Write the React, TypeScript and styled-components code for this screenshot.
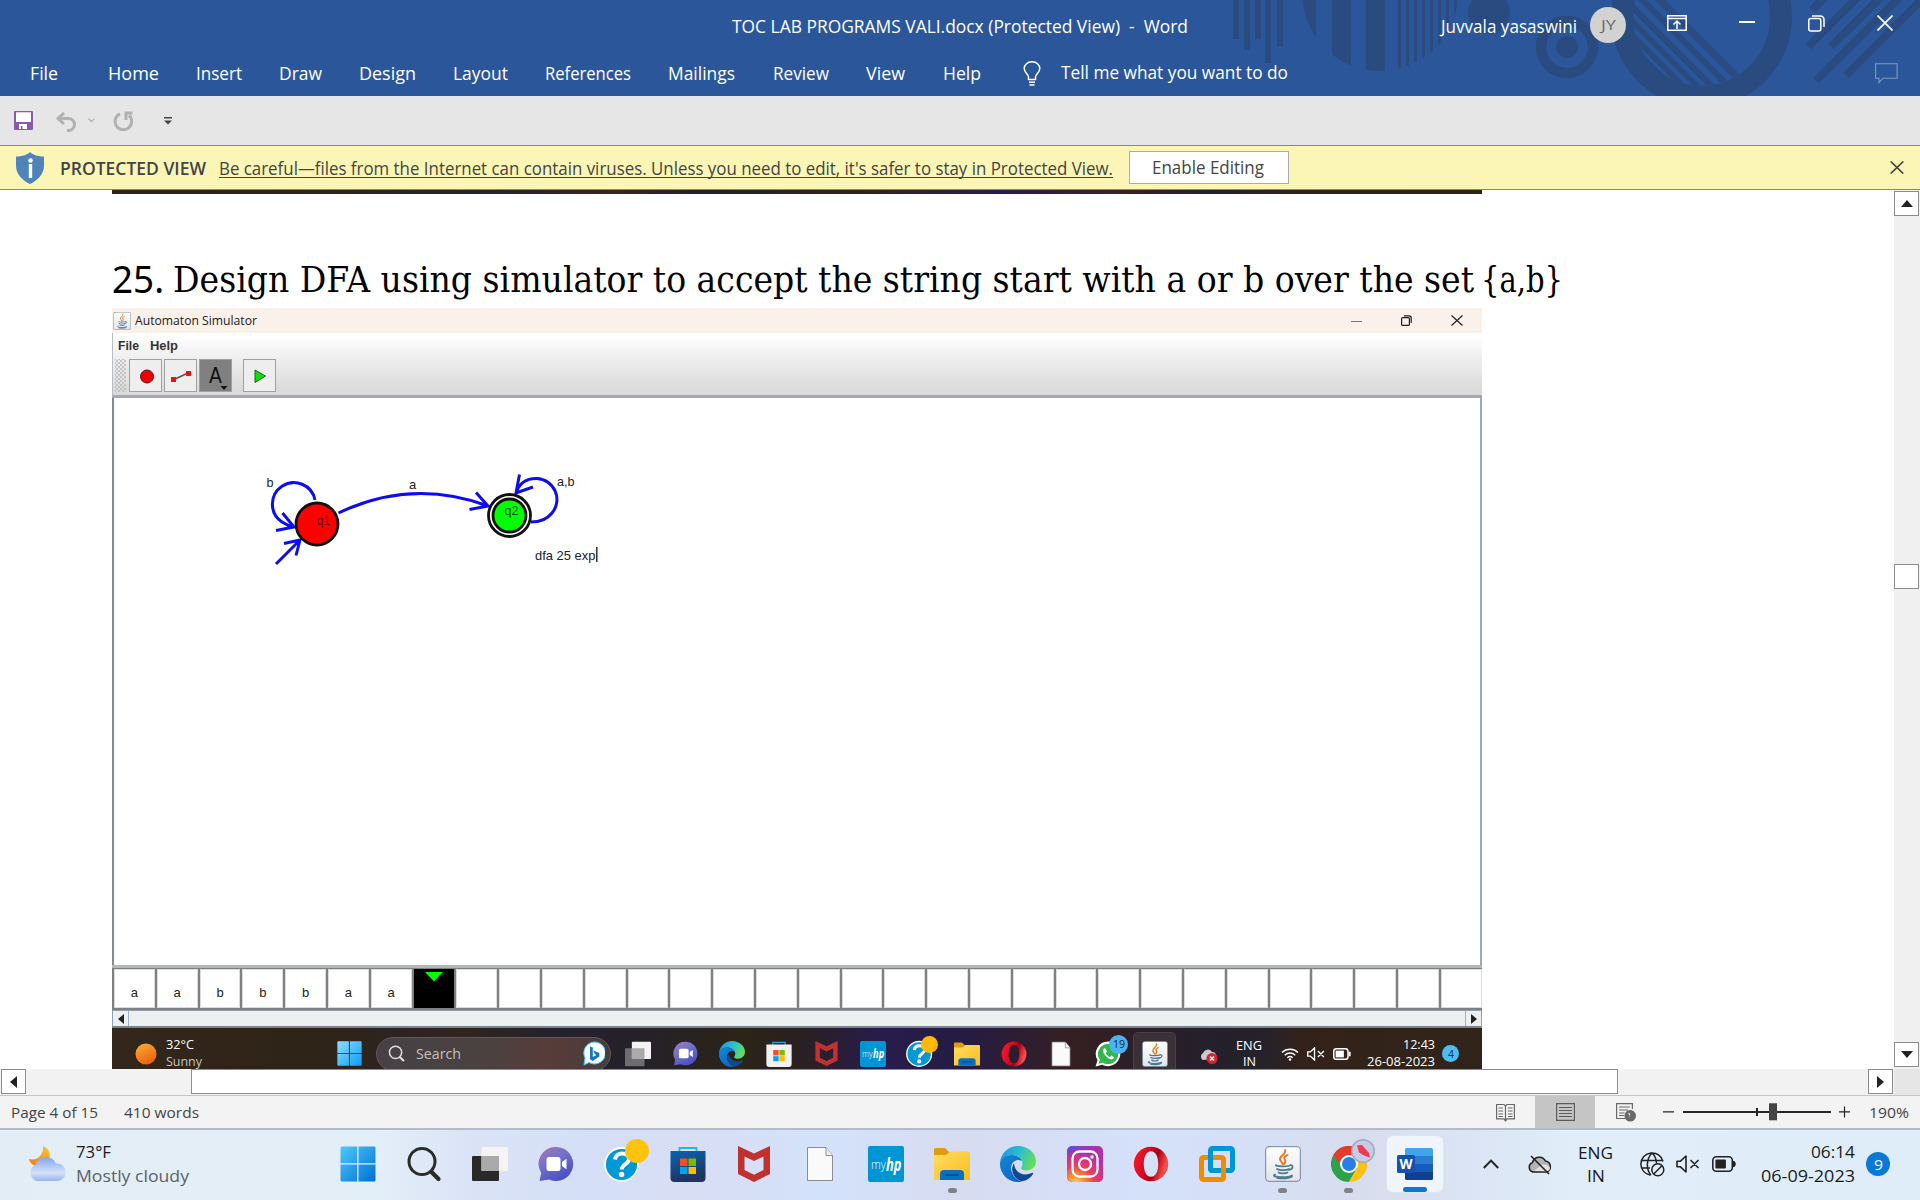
import React, { useLayoutEffect, useRef, useState } from "react";
import styled, { createGlobalStyle } from "styled-components";

const Global = createGlobalStyle`
  * { box-sizing: border-box; }
  body { margin: 0; background: #fff; overflow: hidden; font-family: "Open Sans", "Noto Sans", sans-serif; }
  svg { display: block; flex: none; }
`;

/* ---------- text that keeps a set advance width ---------- */
const LabelBox = styled.div<{ $w: number; $ml: number; $mt: number }>`
  display: flex;
  width: ${(p) => p.$w}px;
  margin-left: ${(p) => p.$ml}px;
  margin-top: ${(p) => p.$mt}px;
  flex: none;
  white-space: pre;
`;
const LabelText = styled.span<{ $size: number; $color: string; $weight: number; $font?: string; $lh: number; $italic?: boolean }>`
  flex: none;
  transform-origin: 0 50%;
  font-size: ${(p) => p.$size}px;
  line-height: ${(p) => p.$lh}px;
  font-weight: ${(p) => p.$weight};
  font-style: ${(p) => (p.$italic ? "italic" : "normal")};
  color: ${(p) => p.$color};
  ${(p) => (p.$font ? `font-family: ${p.$font};` : "")}
`;
type LabelProps = {
  w: number; size: number; children: string; ml?: number; mt?: number;
  color?: string; weight?: number; font?: string; lh?: number; italic?: boolean;
};
function Label({ w, size, children, ml = 0, mt = 0, color = "#fff", weight = 400, font, lh = 22, italic }: LabelProps) {
  const ref = useRef<HTMLSpanElement>(null);
  const [scale, setScale] = useState(1);
  useLayoutEffect(() => {
    const el = ref.current;
    if (el) setScale(w / parseFloat(getComputedStyle(el).width));
  }, [w, children]);
  return (
    <LabelBox $w={w} $ml={ml} $mt={mt}>
      <LabelText ref={ref} $size={size} $color={color} $weight={weight} $font={font} $lh={lh} $italic={italic}
        style={{ transform: `scaleX(${scale})` }}>{children}</LabelText>
    </LabelBox>
  );
}

const arial = '"Liberation Sans", Arial, sans-serif';
const serif = '"DejaVu Serif Condensed", "DejaVu Serif", "Liberation Serif", serif';

/* ---------- page frame ---------- */
const Page = styled.div`
  width: 1920px;
  height: 1200px;
  display: flex;
  flex-direction: column;
  overflow: hidden;
`;
const Slot = styled.div<{ $ml?: number; $mt?: number }>`
  margin-left: ${(p) => p.$ml || 0}px;
  margin-top: ${(p) => p.$mt || 0}px;
  flex: none;
`;

/* ---------- Word header ---------- */
const Header = styled.header`
  position: relative;
  height: 96px;
  flex: none;
  background: #2b579a;
  display: flex;
  flex-direction: column;
`;
const HeaderArt = styled.svg`
  position: absolute;
  right: 0;
  top: 0;
`;
const TitleRow = styled.div`
  position: relative;
  height: 52px;
  display: flex;
  align-items: center;
`;
const TabRow = styled.nav`
  position: relative;
  height: 44px;
  padding-bottom: 1px;
  display: flex;
  align-items: center;
`;
const Avatar = styled.div`
  width: 36px;
  height: 36px;
  margin-left: 13px;
  margin-top: -2px;
  border-radius: 50%;
  background: #d2d2d2;
  display: flex;
  align-items: center;
  justify-content: center;
`;

const Art = () => (
  <HeaderArt width="700" height="96" viewBox="1220 0 700 96" fill="#2a4b80">
    <defs>
      <clipPath id="bigCircle"><circle cx="1380" cy="-7" r="78" /></clipPath>
      <clipPath id="ringHole"><circle cx="1701" cy="17" r="68.500" /></clipPath>
    </defs>
    {[[1233, 39], [1244, 50], [1255, 39], [1265, 63], [1277, 46]].map(([x, h]) => <rect key={x} x={x} width="6" height={h} />)}
    <g clipPath="url(#bigCircle)">
      <rect x="1300" width="16" height="96" /><rect x="1332" width="19" height="96" /><rect x="1366" width="19" height="96" />
      {[1398, 1406, 1414, 1422, 1430, 1438, 1446, 1454].map((x) => <rect key={x} x={x} width="3" height="96" />)}
    </g>
    <circle cx="1489" cy="13" r="21" />
    <circle cx="1567" cy="47" r="26" fill="none" stroke="#2a4b80" strokeWidth="10.500" />
    <circle cx="1567" cy="47" r="11" />
    <circle cx="1701.500" cy="17" r="79.500" fill="none" stroke="#2a4b80" strokeWidth="22" />
    <g clipPath="url(#ringHole)">
      {[[75, 85], [58, 67], [41, 50], [27, 35], [13, 21], [-20, 9]].map(([a, b]) => (
        <path key={a} d={`M${1580 + a} 0H${1580 + b}l100 100h${a - b}z`} />
      ))}
    </g>
    <g stroke="#2a4b80" strokeWidth="8">
      <path d="M1808.500 46.500L1860 -5M1831 46.500L1883 -5M1816 80.500L1902 -5M1846 75.500L1926 -5M1812 10L1827 -5" />
    </g>
  </HeaderArt>
);

const tabs: [string, number, number][] = [
  ["File", 30, 28], ["Home", 108, 51], ["Insert", 196, 46], ["Draw", 279, 43], ["Design", 359, 57],
  ["Layout", 453, 55], ["References", 545, 86], ["Mailings", 668, 67], ["Review", 773, 56], ["View", 866, 39], ["Help", 943, 38],
];

const WordHeader = () => (
  <Header>
    <Art />
    <TitleRow>
      <Label w={456} size={17.3} ml={732} mt={2}>{"TOC LAB PROGRAMS VALI.docx (Protected View)  -  Word"}</Label>
      <Label w={136} size={17.3} ml={253} mt={2}>Juvvala yasaswini</Label>
      <Avatar><Label w={15} size={14} color="#6b6b6b">JY</Label></Avatar>
      <Slot $ml={41} $mt={-6}>
        <svg width="20" height="16" viewBox="0 0 20 16" fill="none" stroke="#fff" strokeWidth="1.500"><path d="M.8.8h18.400v14.400H.8zM.8 3.500h18.400M10 14V6.500M6.500 9.500L10 6l3.500 3.500" /></svg>
      </Slot>
      <Slot $ml={52} $mt={-8}><svg width="16" height="2"><rect width="16" height="2" fill="#fff" /></svg></Slot>
      <Slot $ml={53} $mt={-6}>
        <svg width="17" height="17" viewBox="0 0 17 17" fill="none" stroke="#fff" strokeWidth="1.500"><rect x=".8" y="3.500" width="12" height="12.500" rx="2" /><path d="M4 1h8q4 0 4 4v7" /></svg>
      </Slot>
      <Slot $ml={52} $mt={-6}><svg width="16" height="16" viewBox="0 0 16 16" stroke="#fff" strokeWidth="1.600"><path d="M.5.5l15 15M15.500.5l-15 15" /></svg></Slot>
    </TitleRow>
    <TabRow>
      {tabs.map(([name, x, w], i) => (
        <Label key={name} w={w} size={17.3} ml={i ? x - tabs[i - 1][1] - tabs[i - 1][2] : x}>{name}</Label>
      ))}
      <Slot $ml={42} $mt={0}>
        <svg width="18" height="25" viewBox="0 0 18 25" fill="none" stroke="#fff" strokeWidth="1.500">
          <path d="M5.500 18.500v-2.500C5.500 13 1.200 11.500 1.200 7.500a7.800 6.700 0 0 1 15.600 0c0 4-4.300 5.500-4.300 8.500v2.500zM6 21.200h6M6.500 24h5" />
        </svg>
      </Slot>
      <Label w={227} size={17.3} ml={20} mt={-2}>Tell me what you want to do</Label>
      <Slot $ml={587}>
        <svg width="23" height="21" viewBox="0 0 23 21" fill="none" stroke="#7d99c4" strokeWidth="1.100"><path d="M.6.8h21.500v14.400H8l-4 4.300v-4.300H.6z" /></svg>
      </Slot>
    </TabRow>
  </Header>
);

/* ---------- quick access + protected view ---------- */
const QuickBar = styled.div`
  height: 49px;
  flex: none;
  background: #e6e6e6;
  display: flex;
  align-items: center;
`;
const Notice = styled.div`
  height: 45px;
  flex: none;
  background: #fcf6b6;
  border-top: 1px solid #b88a00;
  border-bottom: 1px solid #b88a00;
  display: flex;
  align-items: center;
`;
const NoticeLink = styled.div`
  margin-left: 13px;
  margin-top: 1px;
  height: 20px;
  border-bottom: 1px solid #444;
`;
const EnableButton = styled.div`
  width: 160px;
  height: 33px;
  margin-left: 16px;
  border: 1px solid #ababab;
  background: #fff;
  display: flex;
  align-items: center;
  padding-left: 22px;
`;

const QuickAccess = () => (
  <QuickBar>
    <Slot $ml={14}>
      <svg width="19" height="19" viewBox="0 0 19 19"><rect width="19" height="19" rx="1" fill="#8c58ad" /><rect x="2" y="1.300" width="15" height="9.700" fill="#fff" /><path d="M5 13h8v5H8.500v-3h-1.500v3H5z" fill="#fff" /></svg>
    </Slot>
    <Slot $ml={22} $mt={2}><svg width="23" height="20" viewBox="0 0 23 20" fill="none" stroke="#b1b1b1" strokeWidth="3"><path d="M9 1L3 6.500 9 12M3 6.500h10.500a6 6 0 0 1 0 12H12" /></svg></Slot>
    <Slot $ml={10}><svg width="7" height="5" viewBox="0 0 7 5" fill="none" stroke="#b1b1b1" strokeWidth="1.300"><path d="M.5.7l3 3 3-3" /></svg></Slot>
    <Slot $ml={18}><svg width="21" height="20" viewBox="0 0 21 20" fill="none" stroke="#b1b1b1" strokeWidth="3"><path d="M7 2.800a8.300 8.300 0 1 0 9 1.500M19.500 2H13v7" /></svg></Slot>
    <Slot $ml={30}><svg width="8" height="8" viewBox="0 0 8 8" fill="#444"><path d="M0 0h8v1.500H0zM0 3.500h8L4 7.500z" /></svg></Slot>
  </QuickBar>
);

const ProtectedView = () => (
  <Notice>
    <Slot $ml={16}>
      <svg width="28" height="32" viewBox="0 0 28 32"><path d="M14 0c2 2.500 8 4.500 14 4.500V14c0 8-7 15-14 18C7 29 0 22 0 14V4.500C6 4.500 12 2.500 14 0z" fill="#4f83ba" /><circle cx="14.500" cy="8.500" r="2.300" fill="#fff" /><rect x="12.800" y="12" width="3.400" height="14" fill="#fff" /></svg>
    </Slot>
    <Label w={146} size={17.3} ml={16} mt={3} color="#444" weight={600}>PROTECTED VIEW</Label>
    <NoticeLink><Label w={894} size={17.3} color="#444">Be careful—files from the Internet can contain viruses. Unless you need to edit, it's safer to stay in Protected View.</Label></NoticeLink>
    <EnableButton><Label w={112} size={17.3} color="#444">Enable Editing</Label></EnableButton>
    <Slot $ml={601} $mt={-1}><svg width="14" height="13" viewBox="0 0 14 13" stroke="#444" strokeWidth="1.700"><path d="M.7.5l12.600 12M13.300.5L.7 12.500" /></svg></Slot>
  </Notice>
);

/* ---------- document ---------- */
const DocRow = styled.div`
  height: 879px;
  flex: none;
  display: flex;
`;
const Doc = styled.main`
  width: 1894px;
  padding-left: 112px;
  background: #fff;
  overflow: hidden;
`;
const PrevStrip = styled.div`
  width: 1370px;
  height: 4px;
  background: linear-gradient(90deg, #2f2318 0, #2b241c 15%, #26222c 28%, #3a2420 37%, #22202a 43%, #302419 55%, #2a1d50 65%, #3a2020 74%, #24202c 80%, #30231a 88%, #2f2318 100%);
`;
const Heading = styled.div`
  height: 114px;
  padding-top: 64px;
  display: flex;
`;
const Sim = styled.section`
  width: 1370px;
  height: 761px;
  display: flex;
  flex-direction: column;
  overflow: hidden;
`;
const SimTitle = styled.div`
  height: 25px;
  flex: none;
  background: #f9f1ea;
  display: flex;
  align-items: center;
`;
const SimTools = styled.div`
  height: 65px;
  flex: none;
  background: linear-gradient(#fff 5%, #f0f0f0 38%, #dadada 92%);
  border-bottom: 3px solid #a3a8ae;
  border-left: 1px solid #b9bec4;
`;
const SimMenu = styled.div`
  display: flex;
  height: 26px;
  padding-left: 4px;
  padding-top: 2px;
`;
const SimButtons = styled.div`
  display: flex;
  height: 33px;
`;
const Grip = styled.div`
  width: 11px;
  height: 33px;
  margin: 0 4px 0 2px;
  background-image: radial-gradient(#c4c4c4 0.8px, transparent 1px), radial-gradient(#c4c4c4 0.8px, transparent 1px);
  background-size: 4px 4px;
  background-position: 0 0, 2px 2px;
`;
const ToolButton = styled.div<{ $on?: boolean; $ml?: number }>`
  width: 33px;
  height: 33px;
  margin-left: ${(p) => p.$ml ?? 1}px;
  border: 1px solid #a0a0a0;
  background: ${(p) => (p.$on ? "#808080" : "#eee")};
  display: flex;
  align-items: center;
  justify-content: center;
`;
const CanvasArea = styled.div`
  height: 567px;
  flex: none;
  background: #fff;
  border-left: 2px solid #7f8b96;
  border-right: 2px solid #9fa8b0;
`;
const Tape = styled.div`
  height: 45px;
  flex: none;
  border-top: 3px solid #b0b8ba;
  background: #808080;
  padding: 1px 0 2px 2px;
  display: flex;
`;
const Cell = styled.div<{ $head?: boolean }>`
  width: 40.8px;
  margin-right: 2px;
  flex: none;
  background: ${(p) => (p.$head ? "#000" : "#fff")};
  box-shadow: inset 0 0 0 1px ${(p) => (p.$head ? "#000" : "#dcdcdc")};
  display: flex;
  justify-content: center;
  align-items: ${(p) => (p.$head ? "flex-start" : "center")};
  padding-top: ${(p) => (p.$head ? 3 : 7)}px;
  font: 13px ${arial};
  color: #222;
`;
const SimScroll = styled.div`
  height: 18px;
  flex: none;
  background: #eeeff0;
  border: 1px solid #8fa0b0;
  border-bottom: 2px solid #77828f;
  display: flex;
  justify-content: space-between;
`;
const SimArrow = styled.div<{ $right?: boolean }>`
  width: 16px;
  display: flex;
  align-items: center;
  justify-content: center;
  border-${(p) => (p.$right ? "left" : "right")}: 1px solid #9fb0c4;
`;
const DarkBar = styled.div`
  position: relative;
  height: 41px;
  flex: none;
  overflow: hidden;
  background: linear-gradient(90deg, #33261a 0, #2f2418 14%, #2d2423 22%, #30251f 26%, #24222b 32%, #24212a 38%, #2c2418 46%, #2a2020 50%, #281c4c 56%, #251c44 62%, #351f22 70%, #2c1f28 75%, #24202c 80%, #26222b 84%, #33221a 87%, #30251a 100%);
`;
const DarkRow = styled.div`
  display: flex;
  height: 51px;
  align-items: center;
`;
const SearchPill = styled.div`
  width: 235px;
  height: 34px;
  margin-left: 14px;
  border-radius: 17px;
  border: 1px solid #625855;
  background: linear-gradient(90deg, #474146, #4a4140 45%, #573c38 75%, #463c40);
  display: flex;
  align-items: center;
  padding-left: 11px;
`;
const ActiveDark = styled.div`
  width: 43px;
  height: 43px;
  margin-left: 12px;
  border-radius: 5px;
  background: #3a3038;
  border: 1px solid #4a4048;
  display: flex;
  align-items: center;
  justify-content: center;
`;
const Stack = styled.div<{ $ml?: number; $end?: boolean; $center?: boolean; $mt?: number }>`
  display: flex;
  flex-direction: column;
  flex: none;
  margin-left: ${(p) => p.$ml || 0}px;
  margin-top: ${(p) => p.$mt || 0}px;
  align-items: ${(p) => (p.$end ? "flex-end" : p.$center ? "center" : "flex-start")};
`;
const IconWrap = styled.div<{ $ml?: number }>`
  position: relative;
  flex: none;
  margin-left: ${(p) => p.$ml || 0}px;
`;
const Badge = styled.div<{ $size: number; $x: number; $y: number; $bg: string }>`
  position: absolute;
  left: ${(p) => p.$x}px;
  top: ${(p) => p.$y}px;
  width: ${(p) => p.$size}px;
  height: ${(p) => p.$size}px;
  border-radius: 50%;
  background: ${(p) => p.$bg};
  display: flex;
  align-items: center;
  justify-content: center;
`;
const CountDot = styled.div<{ $size: number; $ml: number; $bg: string; $mt?: number }>`
  width: ${(p) => p.$size}px;
  height: ${(p) => p.$size}px;
  margin-left: ${(p) => p.$ml}px;
  margin-top: ${(p) => p.$mt || 0}px;
  flex: none;
  border-radius: 50%;
  background: ${(p) => p.$bg};
  display: flex;
  align-items: center;
  justify-content: center;
`;

/* ---------- app icons, all on a 36 unit grid ---------- */
type S = { s?: number };
const Windows = ({ s = 36 }: S) => (
  <svg width={s} height={s} viewBox="0 0 36 36">
    <defs><linearGradient id={`win${s}`} x1="0" y1="0" x2="1" y2="1"><stop offset="0" stopColor={s < 30 ? "#8adfff" : "#4cc8fb"} /><stop offset="1" stopColor={s < 30 ? "#0c9cf5" : "#0170d2"} /></linearGradient></defs>
    <path fill={`url(#win${s})`} d="M1.500.5H17.200V17.200H.5V1.500zM18.500.5H34.500l1 1V17.200H18.500zM.5 18.500H17.200V35.500H1.500l-1-1zM18.500 18.500H35.500v16l-1 1H18.500z" />
  </svg>
);
const SearchIcon = ({ s = 36, c = "#2b2b2b", w = 3 }: S & { c?: string; w?: number }) => (
  <svg width={s} height={s} viewBox="0 0 36 36" fill="none" stroke={c} strokeLinecap="round"><circle cx="16" cy="15.500" r="13" strokeWidth={w} /><path d="M25.500 26l7 7" strokeWidth={w + 1.2} /></svg>
);
const TaskView = ({ s = 36 }: S) => (
  <svg width={s} height={s} viewBox="0 0 36 36"><rect x="0" y="10" width="27" height="25" rx="1" fill={s < 30 ? "#6e6c6e" : "#292929"} /><rect x="9.500" y="1" width="26.500" height="24" rx="1" fill="#f4f4f4" /><rect x="9.500" y="10" width="17.500" height="15" fill="#aaa" /></svg>
);
const Chat = ({ s = 36 }: S) => (
  <svg width={s} height={s} viewBox="0 0 36 36">
    <defs><linearGradient id={`chat${s}`} x1="0" y1="0" x2=".6" y2="1"><stop offset="0" stopColor="#a57bb0" /><stop offset=".45" stopColor="#7572c8" /><stop offset="1" stopColor="#4b50c4" /></linearGradient></defs>
    <path fill={`url(#chat${s})`} d="M18 1a17 17 0 1 1-7 32.400L1.500 35l1.700-8A17 17 0 0 1 18 1z" /><rect x="8.500" y="11" width="14" height="14" rx="2.500" fill="#fff" /><path d="M24 16l4.500-3.200v10.400L24 20z" fill="#fff" />
  </svg>
);
const HelpIcon = ({ s = 36 }: S) => (
  <svg width={s} height={s} viewBox="0 0 36 36"><circle cx="17.500" cy="18.500" r="16.500" fill="#0098d6" stroke="#fff" strokeWidth="1.800" /><path d="M11 13.500c.5-4 3.500-6 7-6 4 0 7 2.300 7 5.500 0 5-7 5-7.300 10.500" fill="none" stroke="#fff" strokeWidth="4" /><circle cx="17.600" cy="28.500" r="2.700" fill="#fff" /></svg>
);
const Store = ({ s = 36 }: S) => (
  <svg width={s} height={s} viewBox="0 0 36 36">
    <defs><linearGradient id="store" x1="0" y1="0" x2=".3" y2="1"><stop offset="0" stopColor="#0b63b4" /><stop offset="1" stopColor="#20335c" /></linearGradient></defs>
    <path d="M9.500 7V2h17v5" fill="none" stroke={s < 30 ? "#2aa0d8" : "#25b4f2"} strokeWidth="1.800" /><path d="M.5 5h35v27a4 4 0 0 1-4 4h-27a4 4 0 0 1-4-4z" fill={s < 30 ? "#f3f2f2" : "url(#store)"} />
    <path d="M10 12.500h7.500V20H10z" fill="#f25022" /><path d="M18.500 12.500H26V20h-7.500z" fill="#7fba00" /><path d="M10 21h7.500v7H10z" fill="#00a4ef" /><path d="M18.500 21H26v7h-7.500z" fill="#ffb900" />
  </svg>
);
const McAfee = ({ s = 36 }: S) => (
  <svg width={s} height={s} viewBox="0 0 36 36"><path d="M2 0l16 7.500L34 0v28l-16 8-16-8zM8.500 10.500V24l9.500 4.800 9.500-4.800V10.500L18 15z" fill="#c1312f" fillRule="evenodd" /></svg>
);
const FileIcon = ({ s = 36 }: S) => (
  <svg width={s} height={s} viewBox="0 0 36 36" fill="#fafafa" stroke="#8c8c8c"><path d="M5.500 1.500H24l6.500 8v25h-25z" /><path d="M24 1.500v8h6.500" fill="#eee" /></svg>
);
const HpTile = styled.div<{ $s: number }>`
  width: ${(p) => p.$s}px;
  height: ${(p) => p.$s}px;
  flex: none;
  border-radius: 2px;
  background: #0096d6;
  display: flex;
  align-items: center;
  justify-content: center;
`;
const MyHp = ({ s = 36 }: S) => (
  <HpTile $s={s}><Label w={s * 0.41} size={s * 0.36} lh={s * 0.5} weight={300}>my</Label><Label w={s * 0.43} size={s * 0.49} lh={s * 0.5} weight={700} italic>hp</Label></HpTile>
);
const Folder = ({ s = 36 }: S) => (
  <svg width={s} height={s} viewBox="0 0 36 36">
    <defs><linearGradient id="fold" x1="0" y1="0" x2="1" y2="1"><stop offset="0" stopColor="#ffdc62" /><stop offset="1" stopColor="#f8bf1e" /></linearGradient></defs>
    <path d="M0 3.500Q0 2 1.500 2H11l4 4H20v6H0z" fill="#dd9d0c" /><path d="M0 9h12l4-3.500h18.500Q36 5.500 36 7v27H0z" fill="url(#fold)" /><path d="M6 34v-6q0-4 4-4h16q4 0 4 4v6z" fill="#0b6ec5" /><rect x="11" y="28.200" width="14" height="1.600" rx=".8" fill="#0a4a86" />
  </svg>
);
const Edge = ({ s = 36 }: S) => (
  <svg width={s} height={s} viewBox="0 0 36 36">
    <defs>
      <linearGradient id={`ed1${s}`} x1="0" y1=".3" x2="1" y2=".6"><stop offset="0" stopColor="#1f97dc" /><stop offset=".5" stopColor="#2cc0cf" /><stop offset="1" stopColor="#6ae04d" /></linearGradient>
      <linearGradient id={`ed2${s}`} x1="0" y1="0" x2=".6" y2="1"><stop offset="0" stopColor="#1486d8" /><stop offset="1" stopColor="#0c68c4" /></linearGradient>
    </defs>
    <path d="M0 16.500C1 7 8.500 0 18 0c10 0 18 7 18 15 0 6-4.500 9.500-9.500 9.500-3.500 0-5.500-1.300-5.500-2.500 0-.8 1.500-1.800 1.500-4.300C22.500 12.500 17 9 11 9 6 9 2 12 0 16.500z" fill={`url(#ed1${s})`} />
    <path d="M0 17C1 12 5.500 9 11 9c5.500 0 9.500 2.500 11 6-6-3.500-12.500 2-10.500 10 1.300 5.500 6 10 10.500 10.400-1.300.4-2.500.6-4 .6C8 36 0 28 0 18z" fill={`url(#ed2${s})`} />
    <path d="M14 17.500c-5 7 1 17 8.500 17.800 5-1 8.500-4 10.500-7.300.5-1-.3-1.500-1.200-1-8 3.800-16.800 0-17.800-9.500z" fill="#114a94" />
  </svg>
);
const Insta = () => (
  <svg width="36" height="36" viewBox="0 0 36 36">
    <defs>
      <linearGradient id="ig1" x1="0" y1="0" x2="1" y2="0"><stop offset="0" stopColor="#5b51d8" /><stop offset=".6" stopColor="#a033b5" /><stop offset="1" stopColor="#b92fa6" /></linearGradient>
      <radialGradient id="ig2" cx=".25" cy="1.05" r="1"><stop offset="0" stopColor="#ffd45c" /><stop offset=".25" stopColor="#fa8d34" /><stop offset=".5" stopColor="#ee3d5c" /><stop offset=".8" stopColor="#cf2f92" stopOpacity=".9" /><stop offset="1" stopColor="#8134c0" stopOpacity="0" /></radialGradient>
    </defs>
    <rect width="36" height="36" rx="5" fill="url(#ig1)" /><rect width="36" height="36" rx="5" fill="url(#ig2)" />
    <g fill="none" stroke="#fff" strokeWidth="2.300"><rect x="5.500" y="5.500" width="25" height="25" rx="7" /><circle cx="18" cy="18" r="6" /></g><circle cx="25" cy="11" r="1.700" fill="#fff" />
  </svg>
);
const Opera = ({ s = 36 }: S) => (
  <svg width={s} height={s} viewBox="0 0 36 36">
    <defs><linearGradient id={`op${s}`} x1="0" y1="0" x2="1" y2=".3"><stop offset="0" stopColor="#ff1b2d" /><stop offset=".5" stopColor="#d10a20" /><stop offset=".7" stopColor="#a70014" /><stop offset="1" stopColor="#ff4b4b" /></linearGradient></defs>
    <path d="M18 .8a17.200 17.200 0 1 1 0 34.400 17.200 17.200 0 0 1 0-34.400zm0 4.400c-4.500 0-7.200 5-7.200 12.800S13.500 30.800 18 30.800 25.200 25.800 25.200 18 22.500 5.200 18 5.200z" fill={`url(#op${s})`} fillRule="evenodd" />
  </svg>
);
const Vmware = () => (
  <svg width="36" height="36" viewBox="0 0 36 36" fill="none" strokeWidth="5"><rect x="11.500" y="2.500" width="22" height="22" rx="2" stroke="#0095d3" /><rect x="2.500" y="11.500" width="22" height="22" rx="2" stroke="#f38b00" /><path d="M11.500 9v13.500q0 2 2 2H20" stroke="#0095d3" /></svg>
);
const Java = ({ s = 36 }: S) => (
  <svg width={s} height={s} viewBox="0 0 36 36" fill="none" strokeLinecap="round">
    <defs><linearGradient id={`jv${s}`} x1="0" y1="0" x2="0" y2="1"><stop offset="0" stopColor="#fff" /><stop offset="1" stopColor="#e2e5e8" /></linearGradient></defs>
    <rect x=".7" y=".7" width="34.600" height="34.600" rx="3" fill={`url(#jv${s})`} stroke="#6f8799" />
    <path d="M20 4c2 4-6 6-5 9.500.5 2 2 2.500 2.500 4.500M22.500 9c-3 1.500-4 3-2.500 5 .8 1.200.5 2.500-1 4" stroke="#ea7620" strokeWidth="1.900" />
    <path d="M11 19c-2 1.500 13 2 14.500 0M12 23c2 1.500 9.500 1.500 12 0M13.500 26.500c2 1.200 6.500 1.200 9 0M24.500 19.500c4.500-1.500 4 3.500-.5 4.500M10 28.500c-6 2.500 12 4 17 1M12 32c6 1 13 .5 15-1.500" stroke="#4d7896" strokeWidth="1.700" />
  </svg>
);
const Chrome = () => (
  <svg width="36" height="36" viewBox="0 0 36 36">
    <path d="M18 18L2.400 9A18 18 0 0 1 33.600 9z" fill="#e33b2e" /><path d="M2.400 9A18 18 0 0 0 18 36l7.800-13.500L18 18z" fill="#2da14c" /><path d="M33.600 9A18 18 0 0 1 18 36l7.800-13.500A9 9 0 0 0 18 9z" fill="#fdc113" />
    <path d="M2.400 9l7.800 13.500L18 18V9z" fill="#2da14c" /><path d="M2.400 9A18 18 0 0 1 33.600 9H18a9 9 0 0 0-8.500 6.500L8 17z" fill="#e33b2e" /><circle cx="18" cy="18" r="9" fill="#fff" /><circle cx="18" cy="18" r="7" fill="#2a7de9" />
  </svg>
);
const WhatsApp = ({ s = 36 }: S) => (
  <svg width={s} height={s} viewBox="0 0 36 36"><path d="M18 .8a17 17 0 1 1-8 32L.8 35.200 3.500 26.500A17 17 0 0 1 18 .8z" fill="#fff" /><path d="M18 4a14 14 0 1 1-7.200 26L5 31.500l1.700-5.500A14 14 0 0 1 18 4z" fill="#2fb84c" /><path d="M12.500 10.500c-3 3 0 8 3 11s8 5.500 10.500 2.500c1-1.500 0-2-3.500-4l-2 2c-2-.5-5-3.500-5.500-5.500l1.500-2c-1.500-4-2.500-5.500-4-4z" fill="#fff" /></svg>
);
const WordIcon = () => (
  <svg width="36" height="34" viewBox="0 0 36 34">
    <path d="M8 2.500Q8 1 9.500 1h25Q36 1 36 2.500V9H8z" fill="#41a5ee" /><path d="M8 9h28v8H8z" fill="#2b7cd3" /><path d="M8 17h28v8H8z" fill="#185abd" /><path d="M8 25h28v6.500q0 1.500-1.500 1.500h-25Q8 33 8 31.500z" fill="#103f91" />
    <rect x="0" y="8" width="18" height="18" rx="1.500" fill="#1650b0" /><text x="9" y="22" fontFamily="Open Sans" fontWeight="700" fontSize="13.500" fill="#fff" textAnchor="middle">W</text>
  </svg>
);
const Bing = () => (
  <svg width="23" height="25" viewBox="0 0 23 25"><path d="M12 1a11 11 0 1 1-5 20.500L2 24l1-7A11 11 0 0 1 12 1z" fill="#f5fbff" stroke="#48c7ea" strokeWidth="1" /><path d="M8 5.500l2.800 1v9.500l3.500-2-1.500-1-1.500-3.500 6 2.500v3.500l-6.500 4.500-2.800-1.800z" fill="#1b73c9" /></svg>
);
const Speaker = ({ c }: { c: string }) => (
  <svg width="24" height="18" viewBox="0 0 24 18" fill="none" stroke={c} strokeWidth="1.600" strokeLinejoin="round"><path d="M1 6.200h3.500L10 1v16l-5.500-5.200H1zM14.500 5l8 8M22.500 5l-8 8" /></svg>
);
const Battery = ({ c, on = 11 }: { c: string; on?: number }) => (
  <svg width="24" height="16" viewBox="0 0 24 16"><rect x=".8" y=".8" width="19.500" height="14.400" rx="3.500" fill="none" stroke={c} strokeWidth="1.600" /><rect x="3.400" y="3.400" width={on} height="9.200" rx="1" fill={c} /><path d="M21 5h1.200q1.600 1 1.600 3t-1.600 3H21z" fill={c} /></svg>
);

/* ---------- automaton window ---------- */
const Diagram = () => (
  <svg width="1366" height="567" viewBox="114 398 1366 567" fontFamily="Liberation Sans" fontSize="13" fill="#222">
    <g fill="none" stroke="#0d0dee" strokeWidth="3">
      <path d="M315 500A21.500 21.500 0 1 0 282 522Q288 526 294 527M282.500 513L294 527 276 530.500" />
      <path d="M276 564L300 540M284 543.500L300 540 296 555.500" />
      <path d="M338.500 513Q412 478 488 506M476 492.500L488 506 469.500 509.500" />
      <path d="M531 522Q545 522 552 513A21 21 0 0 0 537 478.500Q521 478 516 493M519.500 474.500L516 493 533 487" />
    </g>
    <circle cx="317" cy="524" r="21" fill="#f00" stroke="#111" strokeWidth="2.800" />
    <circle cx="509.500" cy="515.500" r="21" fill="#fff" stroke="#111" strokeWidth="2.800" />
    <circle cx="509.500" cy="515.500" r="16.500" fill="#0f0" stroke="#111" strokeWidth="2.800" />
    <text x="266.500" y="487" textLength="7" lengthAdjust="spacingAndGlyphs">b</text>
    <text x="409" y="488.500">a</text>
    <text x="557" y="486" textLength="17.500" lengthAdjust="spacingAndGlyphs">a,b</text>
    <text x="317" y="525" fill="#600" textLength="13" lengthAdjust="spacingAndGlyphs">q1</text>
    <text x="504.500" y="515" fill="#053" textLength="14" lengthAdjust="spacingAndGlyphs">q2</text>
    <text x="535" y="560.300" textLength="60.500" lengthAdjust="spacingAndGlyphs">dfa 25 exp</text>
    <path d="M596.800 547v15" stroke="#111" strokeWidth="1.300" />
  </svg>
);

const tape = ["a", "a", "b", "b", "b", "a", "a"];

const Simulator = () => (
  <Sim>
    <SimTitle>
      <Slot $ml={1}><Java s={18} /></Slot>
      <Label w={122} size={12.3} ml={4} color="#222">Automaton Simulator</Label>
      <Slot $ml={1094}><svg width="11" height="2"><rect width="11" height="1" y="1" fill="#777" /></svg></Slot>
      <Slot $ml={39}><svg width="11" height="11" viewBox="0 0 11 11" fill="none" stroke="#222" strokeWidth="1.200"><rect x=".6" y="2.600" width="7.800" height="7.800" rx="1" /><path d="M3 .8h5Q10.200.8 10.200 3v5" /></svg></Slot>
      <Slot $ml={39}><svg width="12" height="11" viewBox="0 0 12 11" stroke="#222" strokeWidth="1.200"><path d="M.5.5l11 10M11.500.5L.5 10.500" /></svg></Slot>
    </SimTitle>
    <SimTools>
      <SimMenu>
        <Label w={21} size={13} ml={1} weight={700} color="#333" font={arial} lh={21}>File</Label>
        <Label w={28} size={13} ml={11} weight={700} color="#333" font={arial} lh={21}>Help</Label>
      </SimMenu>
      <SimButtons>
        <Grip />
        <ToolButton $ml={-1}><svg width="16" height="16"><circle cx="9" cy="8.500" r="6.500" fill="#f00000" stroke="#5c1010" /></svg></ToolButton>
        <ToolButton $ml={2}><svg width="22" height="14" viewBox="0 0 22 14"><path d="M3 11L18 4" stroke="#555" strokeWidth="1.500" /><rect x="1" y="8" width="5" height="5" fill="#f01010" /><rect x="16" y="2" width="5" height="5" fill="#f01010" /></svg></ToolButton>
        <ToolButton $on $ml={2}>
          <svg width="31" height="31" viewBox="0 0 31 31"><path d="M20.500 26h7l-3.500 4z" fill="#111" /><text x="15.500" y="22.500" fontFamily="DejaVu Sans Condensed, DejaVu Sans" fontSize="21" textAnchor="middle" fill="#111">A</text></svg>
        </ToolButton>
        <ToolButton $ml={11}><svg width="14" height="16"><path d="M2 2l10.500 6L2 14.500z" fill="#0be00b" stroke="#235c23" /></svg></ToolButton>
      </SimButtons>
    </SimTools>
    <CanvasArea><Diagram /></CanvasArea>
    <Tape>
      {Array.from({ length: 32 }, (_, i) => (
        <Cell key={i} $head={i === 7}>{i === 7 ? <svg width="18" height="10"><path d="M0 0h18L9 9.500z" fill="#0f0" /></svg> : tape[i]}</Cell>
      ))}
    </Tape>
    <SimScroll>
      <SimArrow><svg width="6" height="10"><path d="M6 0v10L0 5z" fill="#222" /></svg></SimArrow>
      <SimArrow $right><svg width="6" height="10"><path d="M0 0v10l6-5z" fill="#222" /></svg></SimArrow>
    </SimScroll>
    <DarkBar>
      <DarkRow>
        <Slot $ml={23}><svg width="22" height="22"><defs><linearGradient id="sun" x1="0" y1="0" x2=".5" y2="1"><stop offset="0" stopColor="#fbb234" /><stop offset="1" stopColor="#ee6210" /></linearGradient></defs><circle cx="11" cy="11" r="10.500" fill="url(#sun)" /></svg></Slot>
        <Stack $ml={9} $mt={-1}>
          <Label w={28} size={12} lh={17}>32°C</Label>
          <Label w={36} size={12} lh={17} color="#c8c4c0">Sunny</Label>
        </Stack>
        <Slot $ml={135}><Windows s={25} /></Slot>
        <SearchPill>
          <SearchIcon s={17} c="#e0dcdc" w={3.2} />
          <Label w={45} size={14} ml={11} color="#c5c0c0">Search</Label>
          <Slot $ml={121}><Bing /></Slot>
        </SearchPill>
        <IconWrap $ml={14}><TaskView s={26} /></IconWrap>
        <IconWrap $ml={22}><Chat s={25} /></IconWrap>
        <IconWrap $ml={21}><Edge s={26} /></IconWrap>
        <IconWrap $ml={21}><Store s={26} /></IconWrap>
        <IconWrap $ml={22}><McAfee s={25} /></IconWrap>
        <IconWrap $ml={21}><MyHp s={26} /></IconWrap>
        <IconWrap $ml={20}><HelpIcon s={27} /><Badge $size={17} $x={15} $y={-4} $bg="#ffb90a" /></IconWrap>
        <IconWrap $ml={21}><Folder s={26} /></IconWrap>
        <IconWrap $ml={21}><Opera s={26} /></IconWrap>
        <IconWrap $ml={21}><FileIcon s={26} /></IconWrap>
        <IconWrap $ml={21}><WhatsApp s={26} /><Badge $size={19} $x={14} $y={-6} $bg="#4cb4ec"><Label w={12} size={11.5} color="#102a3c" lh={18}>19</Label></Badge></IconWrap>
        <ActiveDark><Java s={26} /></ActiveDark>
        <Slot $ml={23} $mt={4}><svg width="19" height="16" viewBox="0 0 19 16"><path d="M4 12a4 4 0 0 1 0-7 5 5 0 0 1 9-1 4 4 0 0 1 3 7z" fill="#c9c9cc" /><circle cx="13" cy="10.500" r="5.500" fill="#d8232f" /><path d="M11 8.500l4 4M15 8.500l-4 4" stroke="#fff" strokeWidth="1.500" /></svg></Slot>
        <Stack $ml={18} $center $mt={1}>
          <Label w={26} size={12.5} lh={16.5}>ENG</Label>
          <Label w={13} size={12.5} lh={16.5}>IN</Label>
        </Stack>
        <Slot $ml={19}><svg width="18" height="14" viewBox="0 0 18 14" fill="none" stroke="#fff" strokeWidth="1.400"><path d="M1 5.500a11.500 11.500 0 0 1 16 0M3.700 8.200a7.500 7.500 0 0 1 10.600 0M6.300 10.800a4 4 0 0 1 5.400 0" /><circle cx="9" cy="12.500" r="1.300" fill="#fff" stroke="none" /></svg></Slot>
        <Slot $ml={8}><svg width="18" height="14" viewBox="0 0 24 18" fill="none" stroke="#fff" strokeWidth="1.800"><path d="M1 6.200h3.500L10 1v16l-5.500-5.200H1zM14.500 5l8 8M22.500 5l-8 8" /></svg></Slot>
        <Slot $ml={8}><svg width="18" height="12" viewBox="0 0 24 16"><rect x="1" y="1" width="19" height="14" rx="3.500" fill="none" stroke="#fff" strokeWidth="2" /><rect x="3.500" y="3.500" width="11" height="9" fill="#fff" /><path d="M21 5h2.500v6H21z" fill="#fff" /></svg></Slot>
        <Stack $ml={16} $end $mt={-1}>
          <Label w={32} size={12} lh={17}>12:43</Label>
          <Label w={68} size={12} lh={17}>26-08-2023</Label>
        </Stack>
        <CountDot $size={17} $ml={7} $bg="#4cbcf5"><Label w={6} size={11} color="#10344c" lh={17}>4</Label></CountDot>
      </DarkRow>
    </DarkBar>
  </Sim>
);

/* ---------- scrollbars & status ---------- */
const VScroll = styled.div`
  width: 26px;
  flex: none;
  background: #f0f0f0;
  display: flex;
  flex-direction: column;
  padding-top: 1px;
`;
const ScrollBox = styled.div<{ $w?: number; $h?: number; $mt?: number; $ml?: number }>`
  width: ${(p) => p.$w ?? 25}px;
  height: ${(p) => p.$h ?? 25}px;
  margin-top: ${(p) => p.$mt || 0}px;
  margin-left: ${(p) => p.$ml || 0}px;
  flex: none;
  border: 1px solid #8c8c8c;
  background: #fff;
  display: flex;
  align-items: center;
  justify-content: center;
`;
const HScroll = styled.div`
  height: 26px;
  flex: none;
  background: #f2f2f2;
  display: flex;
`;
const Corner = styled.div`
  width: 26px;
  height: 26px;
  margin-left: 1px;
  background: #e6e6e6;
`;
const Status = styled.footer`
  height: 35px;
  flex: none;
  background: #f3f3f3;
  border-top: 1px solid #c6c6c6;
  border-bottom: 2px solid #b2bbc6;
  display: flex;
  align-items: center;
`;
const ViewOn = styled.div`
  width: 60px;
  height: 32px;
  margin-left: 20px;
  background: #c5c5c5;
  display: flex;
  align-items: center;
  justify-content: center;
  flex: none;
`;

const StatusBar = () => (
  <Status>
    <Label w={87} size={15.3} ml={11} mt={-1} color="#444">Page 4 of 15</Label>
    <Label w={75} size={15.3} ml={26} mt={-1} color="#444">410 words</Label>
    <Slot $ml={1297}>
      <svg width="19" height="19" viewBox="0 0 19 19" fill="none" stroke="#6a6a6a" strokeWidth="1.200"><path d="M.6 1.500H8L9.500 3 11 1.500h7.400v14.400H11L9.500 18 8 15.900H.6zM9.500 3v15" /><path d="M2.500 5H7M2.500 8H7M2.500 11H7M12 5h4.500M12 8h4.500M12 11h4.500M2.500 13.500H7M12 13.500h4.500" /></svg>
    </Slot>
    <ViewOn><svg width="19" height="18" viewBox="0 0 19 18" fill="none" stroke="#5c5c5c" strokeWidth="1.200"><path d="M.6.6h17.800v16.800H.6zM3 4.500h13M3 7.500h13M3 10.500h13M3 13.500h13" /></svg></ViewOn>
    <Slot $ml={21}><svg width="20" height="19" viewBox="0 0 20 19" fill="none" stroke="#6a6a6a" strokeWidth="1.200"><path d="M9 15.500H.6V.6h15.800V6M3 4h11M3 7h9M3 10h5.500M3 12.500h5" /><circle cx="14.200" cy="12.800" r="5.200" fill="#6a6a6a" /><path d="M12 9.500l2.500 1.500-1.500 2 1.500 2.500z" fill="#f3f3f3" stroke="none" /></svg></Slot>
    <Slot $ml={27}>
      <svg width="187" height="18" viewBox="1663 1103 187 18" fill="#262626"><path d="M1663 1111.300h11v1.200h-11zM1683 1111h148v2h-148zM1756 1108h2v8h-2zM1839 1111.300h11v1.200h-11z" /><path d="M1843.900 1106.500h1.200v11h-1.200z" /><path d="M1769 1103.300h8v17h-8z" fill="#444" /></svg>
    </Slot>
    <Label w={40} size={15.3} ml={19} mt={-1} color="#444">190%</Label>
  </Status>
);

/* ---------- Windows taskbar ---------- */
const Taskbar = styled.div`
  height: 70px;
  flex: none;
  display: flex;
  background: linear-gradient(90deg, #e3edf6 0, #e3eff8 19%, #dae3f6 25%, #d4dff7 31%, #d8def4 36%, #d3e2fb 43%, #d7dcf0 50%, #d5e0fa 59%, #d5e0f8 64%, #d8dded 71%, #dbe5f5 77%, #e1edf8 82%, #dfedf9 100%);
  padding-bottom: 2px;
`;
const Weather = styled.div`
  width: 324.5px;
  flex: none;
  display: flex;
  align-items: center;
  padding-left: 28px;
`;
const Apps = styled.div`
  display: flex;
  width: 1123.5px;
  flex: none;
`;
const AppSlot = styled.div<{ $active?: boolean }>`
  position: relative;
  width: ${(p) => (p.$active ? 56 : 66.1)}px;
  height: ${(p) => (p.$active ? 56 : 68)}px;
  margin: ${(p) => (p.$active ? "6px 5px" : "0")};
  border-radius: 6px;
  background: ${(p) => (p.$active ? "#f0f4fb" : "transparent")};
  box-shadow: ${(p) => (p.$active ? "0 0 0 1px #dfe4ee" : "none")};
  display: flex;
  align-items: center;
  justify-content: center;
  flex: none;
`;
const Running = styled.div<{ $w: number; $on?: boolean }>`
  position: absolute;
  bottom: ${(p) => (p.$on ? 0 : 5)}px;
  width: ${(p) => p.$w}px;
  height: 5px;
  border-radius: 3px;
  background: ${(p) => (p.$on ? "#0a78d4" : "#80838b")};
`;
const Tray = styled.div`
  display: flex;
  align-items: center;
`;

const WinTaskbar = () => (
  <Taskbar>
    <Weather>
      <svg width="38" height="36" viewBox="0 0 38 36">
        <defs>
          <linearGradient id="moon" x1="1" y1="0" x2="0" y2="1"><stop offset="0" stopColor="#f9c53c" /><stop offset="1" stopColor="#ee7d12" /></linearGradient>
          <linearGradient id="cloud" x1="0" y1="0" x2="0" y2="1"><stop offset="0" stopColor="#83a5ea" /><stop offset=".65" stopColor="#d3e0fa" /><stop offset="1" stopColor="#9bb4e8" /></linearGradient>
        </defs>
        <path d="M15 0c11 5 8 19-2 20C7 21 2 18 1 13c8 2 15-4 14-13z" fill="url(#moon)" />
        <path d="M9 35a8.500 8.500 0 0 1-1.500-16A11 11 0 0 1 28 17.500 8.800 8.800 0 1 1 28 35z" fill="url(#cloud)" />
      </svg>
      <Stack $ml={10}>
        <Label w={35} size={17} lh={24} color="#1b1b1b">73°F</Label>
        <Label w={113} size={17} lh={24} color="#5c6166">Mostly cloudy</Label>
      </Stack>
    </Weather>
    <Apps>
      <AppSlot><Windows /></AppSlot>
      <AppSlot><SearchIcon /></AppSlot>
      <AppSlot><TaskView /></AppSlot>
      <AppSlot><Chat /></AppSlot>
      <AppSlot><HelpIcon /><Badge $size={24} $x={36} $y={9} $bg="#ffc20e" /></AppSlot>
      <AppSlot><Store /></AppSlot>
      <AppSlot><McAfee /></AppSlot>
      <AppSlot><FileIcon /></AppSlot>
      <AppSlot><MyHp /></AppSlot>
      <AppSlot><Folder /><Running $w={9} /></AppSlot>
      <AppSlot><Edge /></AppSlot>
      <AppSlot><Insta /></AppSlot>
      <AppSlot><Opera /></AppSlot>
      <AppSlot><Vmware /></AppSlot>
      <AppSlot><Java /><Running $w={9} /></AppSlot>
      <AppSlot>
        <Chrome /><Running $w={9} />
        <Badge $size={24} $x={35} $y={9} $bg="#a3a9bb">
          <svg width="22" height="22"><circle cx="11" cy="11" r="10.500" fill="#c6cbe6" /><path d="M5 5.500l5-.5 7 8 1 4.500-6-2-5-3z" fill="#ee3a52" /></svg>
        </Badge>
      </AppSlot>
      <AppSlot $active><WordIcon /><Running $w={24} $on /></AppSlot>
    </Apps>
    <Tray>
      <Slot $ml={35}><svg width="16" height="10" viewBox="0 0 16 10" fill="none" stroke="#222" strokeWidth="1.900"><path d="M.8 9L8 1.500 15.200 9" /></svg></Slot>
      <Slot $ml={28} $mt={2}><svg width="25" height="20" viewBox="0 0 25 20"><path d="M6 17a5 5 0 0 1-.5-9.500A7 7 0 0 1 18.500 6 5.600 5.600 0 0 1 19 17z" fill="#b4b4b4" stroke="#222" strokeWidth="1.600" /><path d="M7 16L15 9.500q7-.5 8 3.500-.5 3.300-4 3.300z" fill="#e2e2e2" /><path d="M4 1l18 18" stroke="#222" strokeWidth="1.600" /></svg></Slot>
      <Stack $ml={26} $center $mt={1}>
        <Label w={35} size={17} lh={22.5} color="#1b1b1b">ENG</Label>
        <Label w={18} size={17} lh={22.5} color="#1b1b1b">IN</Label>
      </Stack>
      <Slot $ml={27}>
        <svg width="25" height="25" viewBox="0 0 25 25" fill="none" stroke="#222" strokeWidth="1.500"><path d="M23 9.500A11.200 11.200 0 1 0 10.500 23.200M1.500 8.500h21M1.500 16H10M12 1C6 7 6 18 11 23M12 1c3 3 4.500 6.500 4.500 10" /><circle cx="17.800" cy="17.800" r="6" /><path d="M13.700 22l8.300-8.300" /></svg>
      </Slot>
      <Slot $ml={11}><Speaker c="#222" /></Slot>
      <Slot $ml={12}><Battery c="#222" on={10.500} /></Slot>
      <Stack $ml={25} $end>
        <Label w={44} size={17} lh={24.500} color="#1b1b1b">06:14</Label>
        <Label w={94} size={17} lh={24.500} color="#1b1b1b">06-09-2023</Label>
      </Stack>
      <CountDot $size={24} $ml={11} $bg="#0a78d6"><Label w={9} size={15}>9</Label></CountDot>
    </Tray>
  </Taskbar>
);

export default function App() {
  return (
    <Page>
      <Global />
      <WordHeader />
      <QuickAccess />
      <ProtectedView />
      <DocRow>
        <Doc>
          <PrevStrip />
          <Heading>
            <Label w={52} size={38} lh={44} mt={-2} color="#000" font={'"Noto Sans", sans-serif'}>25.</Label>
            <Label w={1301} size={35.5} lh={44} ml={9} color="#000" font={serif}>{"Design DFA using simulator to accept the string start with a or b over the set"}</Label>
            <Label w={82} size={35.5} lh={44} ml={7} color="#000" font={serif}>{"{a,b}"}</Label>
          </Heading>
          <Simulator />
        </Doc>
        <VScroll>
          <ScrollBox><svg width="12" height="7"><path d="M0 7h12L6 0z" fill="#222" /></svg></ScrollBox>
          <ScrollBox $mt={348} />
          <ScrollBox $mt={453}><svg width="12" height="7"><path d="M0 0h12L6 7z" fill="#222" /></svg></ScrollBox>
        </VScroll>
      </DocRow>
      <HScroll>
        <ScrollBox $ml={1}><svg width="7" height="12"><path d="M7 0v12L0 6z" fill="#222" /></svg></ScrollBox>
        <ScrollBox $w={1427} $ml={165} />
        <ScrollBox $ml={250}><svg width="7" height="12"><path d="M0 0v12l7-6z" fill="#222" /></svg></ScrollBox>
        <Corner />
      </HScroll>
      <StatusBar />
      <WinTaskbar />
    </Page>
  );
}
